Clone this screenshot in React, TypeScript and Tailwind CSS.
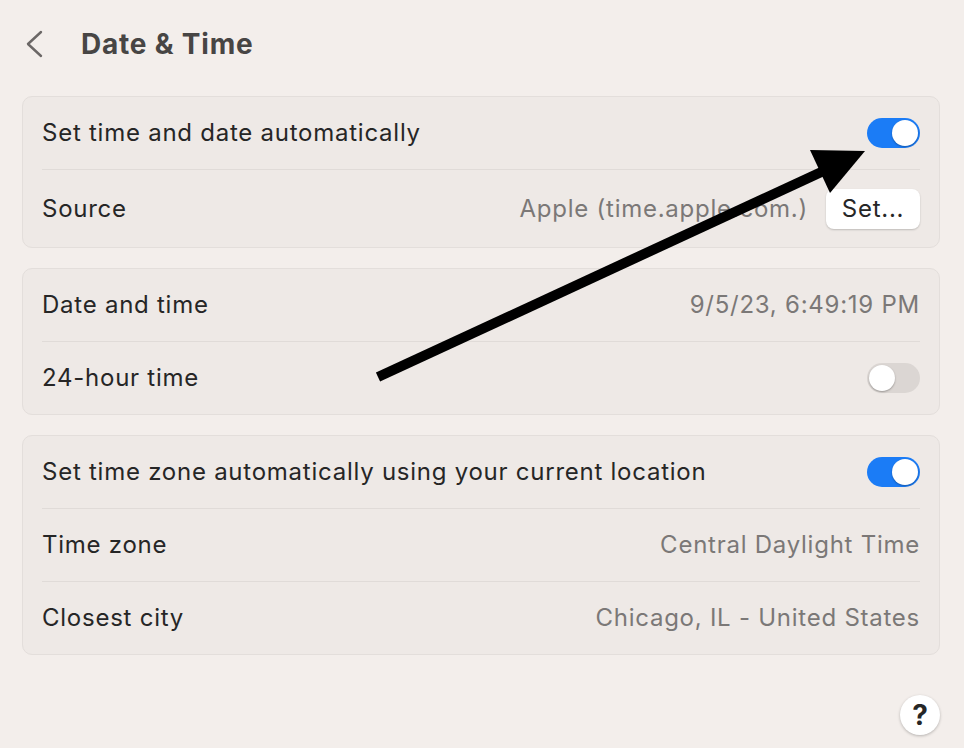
import React from 'react'

const font = { fontFamily: 'Inter, "Noto Sans", sans-serif' }

function Toggle({ on }: { on: boolean }) {
  return (
    <div
      className={`w-[53px] h-[30px] rounded-full p-[2px] flex items-center ${
        on ? 'bg-[#1b7cf6] justify-end' : 'bg-[#dbd6d3] justify-start'
      }`}
    >
      <div className="w-[26px] h-[26px] rounded-full bg-white shadow-[0_1px_2px_rgba(0,0,0,0.3)]" />
    </div>
  )
}

function Row({
  label,
  children,
  last,
  tall,
}: {
  label: string
  children?: React.ReactNode
  last?: boolean
  tall?: boolean
}) {
  return (
    <div
      className={`flex items-center justify-between ${tall ? 'h-[77px]' : 'h-[72px]'} ${
        last ? '' : 'border-b border-[#e0dbd8] box-content'
      }`}
    >
      <span className="text-[24px] tracking-[0.75px] text-[#262626]">{label}</span>
      <div className="flex items-center gap-[18px]">{children}</div>
    </div>
  )
}

function Card({ children }: { children: React.ReactNode }) {
  return (
    <div className="w-[918px] bg-[#eee9e6] border border-[#e3dedb] rounded-[10px] px-[19px]">{children}</div>
  )
}

const Value = ({ text }: { text: string }) => (
  <span className="text-[24px] tracking-[0.75px] text-[#7b7877]">{text}</span>
)

export default function App() {
  return (
    <div className="relative w-[964px] h-[748px] bg-[#f3eeeb] overflow-hidden" style={font}>
      {/* header */}
      <div className="h-[96px] flex items-center pl-[25px] pb-[8px]">
        <svg width="18" height="28" viewBox="0 0 18 28" className="mr-[38px]">
          <path d="M16 2 L3 14 L16 26" fill="none" stroke="#6b6766" strokeWidth="2.4" strokeLinecap="round" strokeLinejoin="round" />
        </svg>
        <h1 className="text-[28px] font-bold tracking-[0.8px] text-[#474544]">Date &amp; Time</h1>
      </div>

      <div className="pl-[22px] flex flex-col gap-[20px]">
        <Card>
          <Row label="Set time and date automatically">
            <Toggle on />
          </Row>
          <Row label="Source" last tall>
            <Value text="Apple (time.apple.com.)" />
            <button className="h-[40px] w-[94px] bg-white rounded-[8px] text-[24px] tracking-[0.75px] text-[#262626] shadow-[0_1px_2px_rgba(0,0,0,0.2)]">
              Set...
            </button>
          </Row>
        </Card>

        <Card>
          <Row label="Date and time">
            <Value text="9/5/23, 6:49:19 PM" />
          </Row>
          <Row label="24-hour time" last>
            <Toggle on={false} />
          </Row>
        </Card>

        <Card>
          <Row label="Set time zone automatically using your current location">
            <Toggle on />
          </Row>
          <Row label="Time zone">
            <Value text="Central Daylight Time" />
          </Row>
          <Row label="Closest city" last>
            <Value text="Chicago, IL - United States" />
          </Row>
        </Card>
      </div>

      {/* help button */}
      <div className="absolute left-[900px] top-[695px] w-[40px] h-[40px] rounded-full bg-white shadow-[0_1px_3px_rgba(0,0,0,0.25)] flex items-center justify-center text-[28px] font-bold text-[#262626]">
        ?
      </div>

      {/* annotation arrow */}
      <svg className="absolute inset-0 pointer-events-none" width="964" height="748">
        <line x1="378" y1="377" x2="830" y2="168" stroke="#000" strokeWidth="10" />
        <polygon points="810,150 865,151 830,193" fill="#000" />
      </svg>
    </div>
  )
}
